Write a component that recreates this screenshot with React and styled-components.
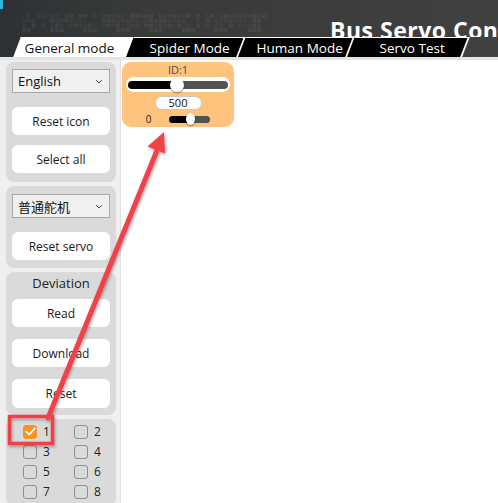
import React from 'react'
import styled, { createGlobalStyle } from 'styled-components'

const GlobalStyle = createGlobalStyle`
  body {
    margin: 0;
    background: #fff;
    font-family: "Open Sans", "Noto Sans", "Noto Sans CJK SC", sans-serif;
  }
`

const Window = styled.div`
  position: relative;
  width: 498px;
  height: 503px;
  overflow: hidden;
  background: #fff;
  display: flex;
  flex-direction: column;
`

const Header = styled.header`
  flex: none;
  height: 57px;
  display: flex;
  flex-direction: column;
  background:
    linear-gradient(#2cb6e3, #2cb6e3) 0 0 / 3px 9px no-repeat,
    linear-gradient(90deg, #2e3133 0%, #383939 25%, #3c3c3c 60%, #414141 100%);
`

const TitleRow = styled.div`
  height: 37px;
  display: flex;
  padding-left: 22px;
  overflow: hidden;

  & > svg {
    flex: none;
  }
`

const Title = styled.h1`
  flex: none;
  margin: 0 0 0 63px;
  padding-top: 15px;
  font-size: 23px;
  line-height: 31px;
  font-weight: 700;
  letter-spacing: 0.5px;
  color: #fff;
  white-space: nowrap;
`

const TabRow = styled.nav`
  height: 20px;
  display: flex;
  padding-left: 17px;
`

const Tab = styled.div`
  box-sizing: border-box;
  width: ${p => p.$w}px;
  height: 20px;
  display: flex;
  align-items: center;
  justify-content: center;
  transform: skewX(-21deg);
  background: ${p => (p.$active ? '#fff' : '#000')};
  border-top: 1px solid #fff;
  border-right: ${p => (p.$active ? 0 : 2)}px solid #fff;
`

const TabLabel = styled.span`
  transform: skewX(21deg);
  font-size: 13.5px;
  color: ${p => (p.$active ? '#111' : '#fff')};
  padding-left: ${p => (p.$active ? 0 : 10)}px;
  padding-right: ${p => (p.$active ? 8 : 0)}px;
  white-space: nowrap;
`

const Divider = styled.div`
  flex: none;
  height: 3px;
  background: #e4e4e4;
`

const Body = styled.div`
  flex: 1;
  display: flex;
  min-height: 0;
`

const Sidebar = styled.aside`
  box-sizing: border-box;
  width: 121px;
  flex: none;
  padding: 2px 4px 0 6px;
  background: #efefef;
  border-right: 1px solid #e2e2e2;
  display: flex;
  flex-direction: column;
  gap: 4px;
`

const Panel = styled.section`
  background: #dadada;
  border-radius: 8px;
  padding: ${p => p.$pad || '7px 6px 8px'};
  display: flex;
  flex-direction: column;
`

const SelectBox = styled.div`
  box-sizing: border-box;
  height: 24px;
  display: flex;
  align-items: center;
  justify-content: space-between;
  padding: 0 6px 0 5px;
  background: #f0f0f0;
  border: 1px solid #a8a8a8;
  font-size: 13px;
  color: #111;
  margin-bottom: ${p => p.$mb || 0}px;
`

const Button = styled.button`
  height: ${p => p.$h || 28}px;
  border: none;
  border-radius: 6px;
  background: #fff;
  font-family: inherit;
  font-size: 12px;
  color: #1a1a1a;
  padding: 0;
  margin-top: ${p => p.$mt || 0}px;
`

const PanelLabel = styled.div`
  text-align: center;
  font-size: 13px;
  color: #222;
  line-height: 18px;
  margin-bottom: 7px;
`

const CheckGrid = styled.div`
  display: grid;
  grid-template-columns: 51px 51px;
  row-gap: 7px;
`

const CheckItem = styled.label`
  display: flex;
  align-items: center;
  gap: 6px;
  height: 13px;
  font-size: 12px;
  color: #222;
`

const Box = styled.span`
  box-sizing: border-box;
  width: 14px;
  height: 14px;
  border-radius: 3px;
  border: 1px solid ${p => (p.$checked ? '#f7931e' : '#8e8e8e')};
  background: ${p => (p.$checked ? '#f7931e' : 'transparent')};
  display: flex;
  align-items: center;
  justify-content: center;
`

const Main = styled.main`
  flex: 1;
  padding: 2px 0 0 1px;
  background: #fff;
`

const Card = styled.div`
  box-sizing: border-box;
  width: 112px;
  height: 65px;
  border-radius: 9px;
  background: #fec47e;
  padding: 2px 4px 0;
  display: flex;
  flex-direction: column;
  align-items: center;
`

const CardTitle = styled.div`
  font-size: 11px;
  line-height: 12px;
  color: #4a4a4a;
`

const SliderPill = styled.div`
  box-sizing: border-box;
  width: 104px;
  height: 15px;
  margin-top: 1px;
  padding: 0 2px;
  border-radius: 8px;
  background: #fff;
  display: flex;
  align-items: center;
`

const Fill = styled.div`
  height: ${p => p.$h}px;
  width: ${p => (p.$w ? `${p.$w}px` : 'auto')};
  flex: ${p => (p.$w ? 'none' : 1)};
  background: ${p => (p.$dark ? '#000' : '#525252')};
  border-radius: ${p => (p.$dark ? '4px 0 0 4px' : '0 4px 4px 0')};
`

const Thumb = styled.div`
  flex: none;
  width: ${p => p.$w}px;
  height: ${p => p.$h}px;
  margin: 0 -${p => p.$w / 2 - 1}px;
  border-radius: 50%;
  background: #fff;
  box-shadow: 0 1px 2px rgba(0, 0, 0, 0.45);
  position: relative;
  z-index: 1;
`

const ValuePill = styled.div`
  box-sizing: border-box;
  width: 47px;
  height: 14px;
  margin-top: 4px;
  border-radius: 7px;
  background: #fff;
  border: 1px solid #c9c9c9;
  font-size: 11px;
  line-height: 12px;
  text-align: center;
  color: #111;
`

const SpeedRow = styled.div`
  display: flex;
  align-items: center;
  gap: 18px;
  margin-top: 3px;
  height: 12px;
`

const SpeedLabel = styled.span`
  font-size: 10px;
  color: #222;
`

const MiniSlider = styled.div`
  width: 41px;
  display: flex;
  align-items: center;
`

const Overlay = styled.svg`
  position: absolute;
  left: 0;
  top: 0;
  pointer-events: none;
`

const Chevron = () => (
  <svg width="8" height="5" viewBox="0 0 8 5">
    <path d="M1 1l3 3 3-3" fill="none" stroke="#555" strokeWidth="1" />
  </svg>
)

const Check = () => (
  <svg width="11" height="9" viewBox="0 0 11 9">
    <path d="M1.2 4.6l3 3L9.8 1.3" fill="none" stroke="#fff" strokeWidth="1.8" strokeLinecap="round" strokeLinejoin="round" />
  </svg>
)

function PixelPattern() {
  const cells = []
  for (let r = 0; r < 4; r++) {
    for (let c = 0; c < 52; c++) {
      const h = (c * 37 + r * 91 + c * r * 17 + ((c * c) % 7)) % 11
      if (h < 3) continue
      cells.push(
        <rect key={`${r}-${c}`} x={c * 4.7} y={14 + r * 4.7} width="4" height="4"
          fill="#fff" opacity={h > 7 ? 0.06 : 0.035} />
      )
    }
  }
  return <svg width="245" height="37">{cells}</svg>
}

const tabs = [
  { label: 'General mode', w: 113, active: true },
  { label: 'Spider Mode', w: 112 },
  { label: 'Human Mode', w: 109 },
  { label: 'Servo Test', w: 115 },
]

export default function App() {
  return (
    <Window>
      <GlobalStyle />
      <Header>
        <TitleRow>
          <PixelPattern />
          <Title>Bus Servo Con</Title>
        </TitleRow>
        <TabRow>
          {tabs.map(t => (
            <Tab key={t.label} $w={t.w} $active={t.active}>
              <TabLabel $active={t.active}>{t.label}</TabLabel>
            </Tab>
          ))}
        </TabRow>
      </Header>
      <Divider />
      <Body>
        <Sidebar>
          <Panel $pad="7px 6px 9px">
            <SelectBox $mb={14}>English <Chevron /></SelectBox>
            <Button>Reset icon</Button>
            <Button $mt={10}>Select all</Button>
          </Panel>
          <Panel $pad="8px 6px 8px">
            <SelectBox $mb={14}>普通舵机 <Chevron /></SelectBox>
            <Button>Reset servo</Button>
          </Panel>
          <Panel $pad="2px 6px 7px">
            <PanelLabel>Deviation</PanelLabel>
            <Button>Read</Button>
            <Button $mt={12}>Download</Button>
            <Button $mt={12} $h={29}>Reset</Button>
          </Panel>
          <Panel $pad="6px 0 8px 17px">
            <CheckGrid>
              {[1, 2, 3, 4, 5, 6, 7, 8].map(n => (
                <CheckItem key={n}>
                  <Box $checked={n === 1}>{n === 1 && <Check />}</Box>
                  {n}
                </CheckItem>
              ))}
            </CheckGrid>
          </Panel>
        </Sidebar>
        <Main>
          <Card>
            <CardTitle>ID:1</CardTitle>
            <SliderPill>
              <Fill $dark $w={48} $h={8} />
              <Thumb $w={14} $h={14} />
              <Fill $h={8} />
            </SliderPill>
            <ValuePill>500</ValuePill>
            <SpeedRow>
              <SpeedLabel>0</SpeedLabel>
              <MiniSlider>
                <Fill $dark $w={20} $h={7} />
                <Thumb $w={9} $h={12} />
                <Fill $h={7} />
              </MiniSlider>
            </SpeedRow>
          </Card>
        </Main>
      </Body>
      <Overlay width="498" height="503" viewBox="0 0 498 503">
        <defs>
          <filter id="sh" x="-20%" y="-20%" width="140%" height="140%">
            <feDropShadow dx="1" dy="1.5" stdDeviation="1.5" floodColor="#000" floodOpacity="0.35" />
          </filter>
        </defs>
        <g filter="url(#sh)">
          <rect x="9.5" y="416.5" width="43" height="27" fill="none" stroke="#ef4149" strokeWidth="3.5" />
          <line x1="48" y1="418" x2="158" y2="148" stroke="#f0434b" strokeWidth="5" strokeLinecap="round" />
          <polygon points="164,132 147.5,146.5 165,153.5" fill="#f0434b" />
        </g>
      </Overlay>
    </Window>
  )
}
